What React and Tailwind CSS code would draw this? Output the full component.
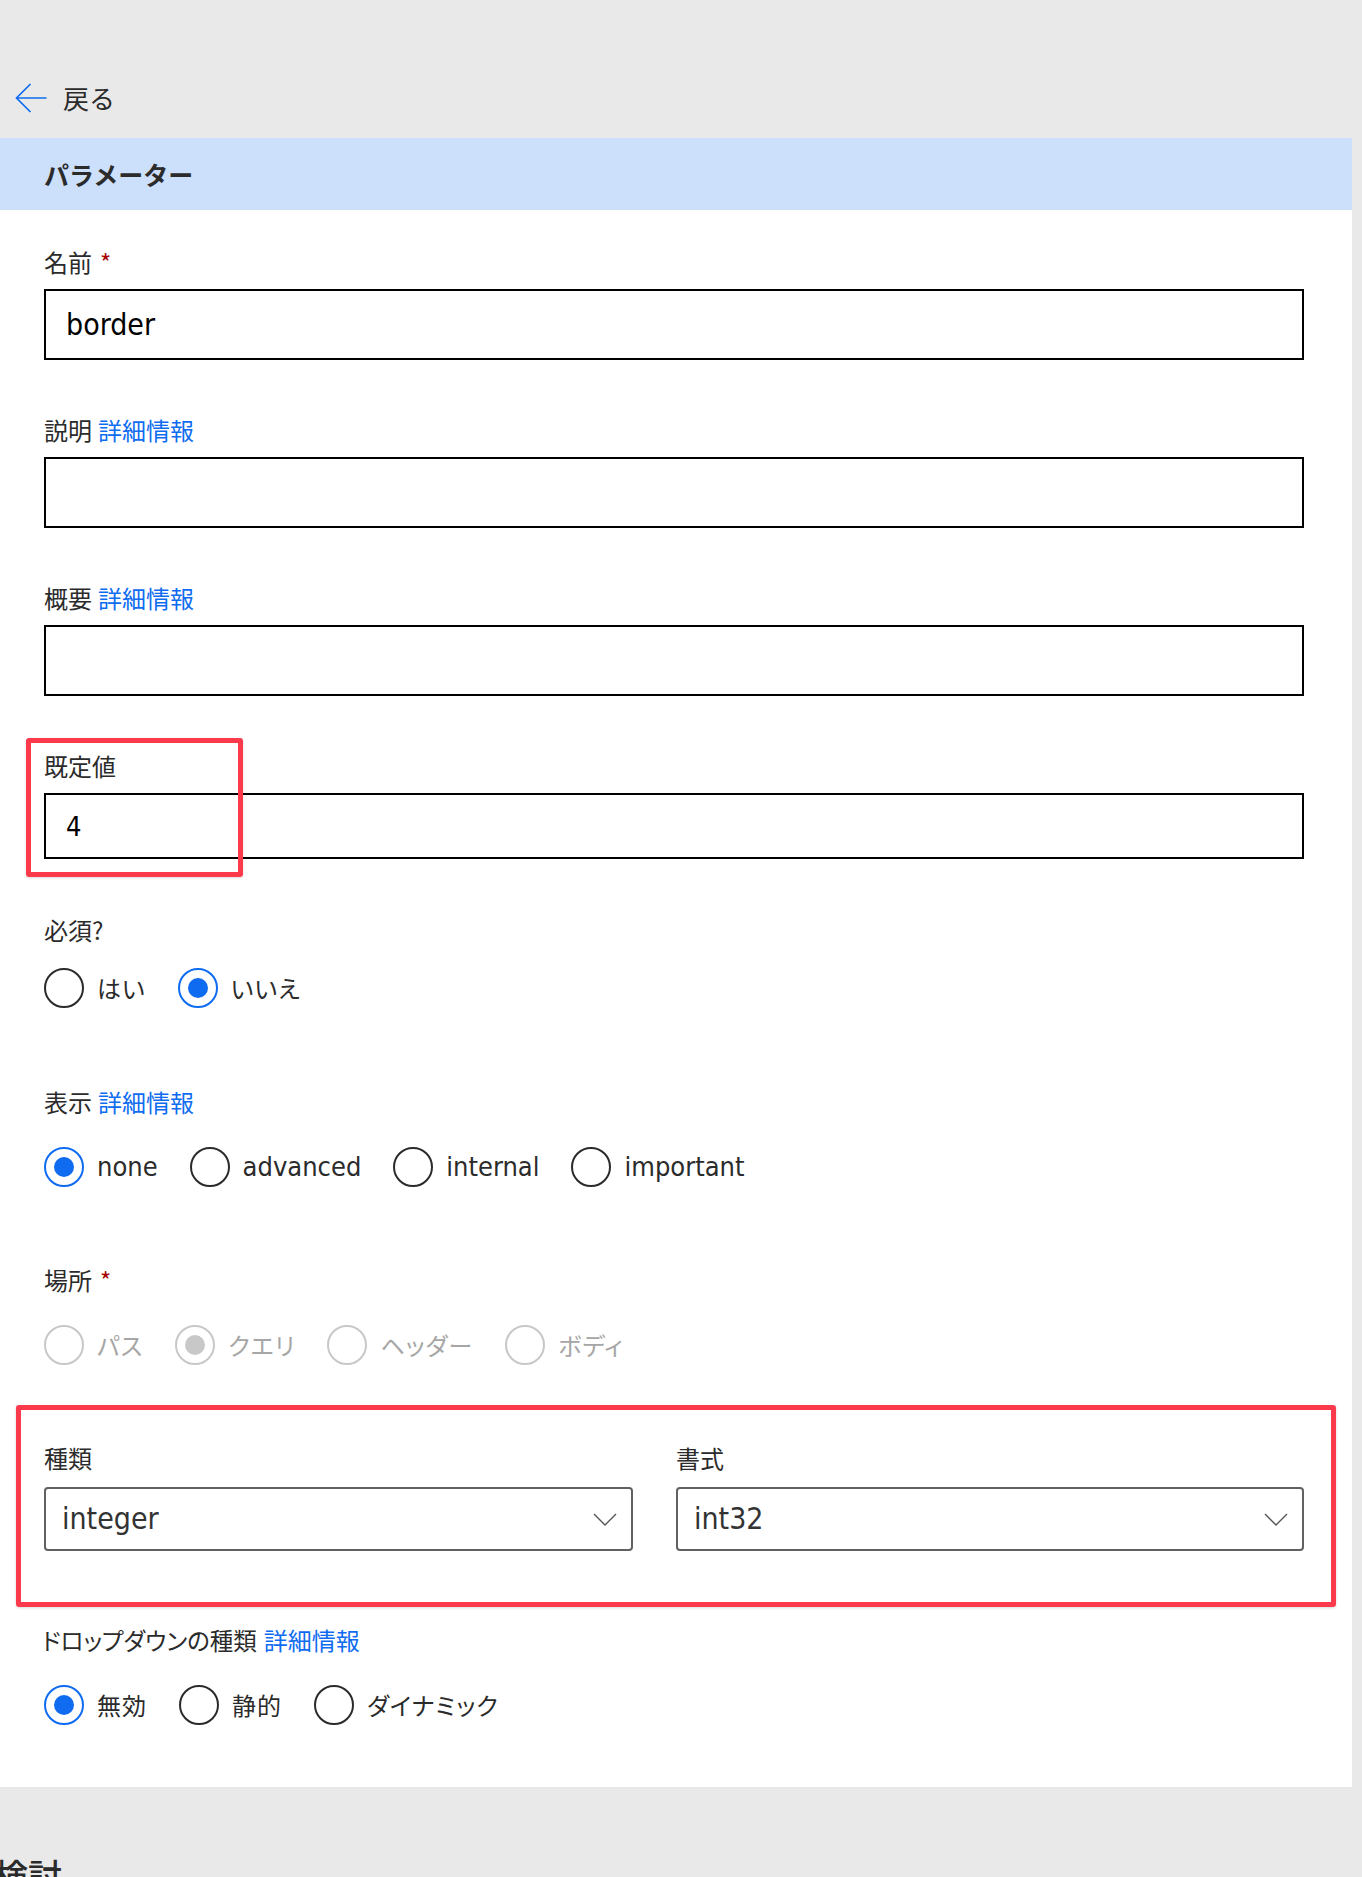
import React from "react";

const LATIN = "font-['Liberation_Sans_Narrow','Arial_Narrow','DejaVu_Sans_Condensed','Noto_Sans_CJK_JP',sans-serif]";

function Label({ children, className = "" }) {
  return (
    <div className={"flex h-[30px] items-center leading-[30px] text-[#2b2b2b] " + className}>
      {children}
    </div>
  );
}

function More() {
  return <span className="ml-[6px] text-[24px] text-[#0f6cf0]">詳細情報</span>;
}

function Star() {
  return <span className="ml-[8px] text-[24px] text-[#a80000]">*</span>;
}

function TextBox({ value, h = "h-[71px]", latinSize = "text-[30px]" }) {
  return (
    <div className={"mt-[12px] flex items-center border-2 border-black bg-white px-[20px] text-black " + h}>
      <span className={LATIN + " leading-none " + latinSize}>{value}</span>
    </div>
  );
}

function Radio({ label, checked = false, disabled = false, latin = false }) {
  const ring = disabled
    ? "border-[#c8c8c8]"
    : checked
    ? "border-[#0f6cf0]"
    : "border-[#2b2b2b]";
  const dot = disabled ? "bg-[#c8c8c8]" : "bg-[#0f6cf0]";
  const txtColor = disabled ? "text-[#a6a6a6]" : "text-[#2b2b2b]";
  return (
    <div className="flex items-center gap-[13px]">
      <span
        className={
          "flex h-[40px] w-[40px] shrink-0 items-center justify-center rounded-full border-2 bg-white " + ring
        }
      >
        {checked && <span className={"h-[20px] w-[20px] rounded-full " + dot} />}
      </span>
      {latin ? (
        <span className={LATIN + " text-[27px] leading-[40px] " + txtColor}>{label}</span>
      ) : (
        <span className={"text-[24px] leading-[40px] tracking-[1px] [font-feature-settings:'palt'] " + txtColor}>
          {label}
        </span>
      )}
    </div>
  );
}

function RadioRow({ children, mt = "mt-[30px]" }) {
  return <div className={"flex h-[40px] items-center gap-[32px] " + mt}>{children}</div>;
}

function Chevron() {
  return (
    <svg width="24" height="13" viewBox="0 0 24 13" fill="none">
      <path d="M1 1l11 11L23 1" stroke="#555" strokeWidth="1.4" />
    </svg>
  );
}

function Select({ value, className = "" }) {
  return (
    <div
      className={
        "mt-[14px] flex h-[64px] items-center justify-between rounded-[4px] border-2 border-[#616161] bg-white pl-[16px] pr-[14px] " +
        className
      }
    >
      <span className={LATIN + " text-[30px] leading-none text-[#333]"}>{value}</span>
      <Chevron />
    </div>
  );
}

export default function App() {
  return (
    <div className="h-[1877px] w-full overflow-hidden bg-[#e9e9e9] font-['Noto_Sans_CJK_JP',sans-serif] text-[#333]">
      {/* back link */}
      <div className="flex h-[138px] items-end pb-[25px] pl-[15px]">
        <div className="flex h-[30px] items-center gap-[16px]">
          <svg width="32" height="30" viewBox="0 0 32 30" fill="none">
            <path d="M31.5 15H1.5M15.5 1L1.5 15l14 14" stroke="#0f6cf0" strokeWidth="1.7" />
          </svg>
          <span className="text-[26px] leading-[30px] text-[#2b2b2b]">戻る</span>
        </div>
      </div>

      {/* panel */}
      <div className="mr-[10px] bg-white pb-[62px]">
        <div className="flex h-[72px] items-center bg-[#cde0fb] pl-[44px]">
          <h1 className="text-[25px] font-bold leading-none text-[#2b2b2b]">パラメーター</h1>
        </div>

        <div className="pl-[44px] pr-[48px] pt-[37px]">
          <div>
            <Label className="text-[24px]">
              名前
              <Star />
            </Label>
            <TextBox value="border" />
          </div>

          <div className="mt-[55px]">
            <Label className="text-[24px]">
              説明
              <More />
            </Label>
            <TextBox value="" />
          </div>

          <div className="mt-[55px]">
            <Label className="text-[24px]">
              概要
              <More />
            </Label>
            <TextBox value="" />
          </div>

          <div className="relative mt-[55px]">
            <Label className="text-[24px]">既定値</Label>
            <TextBox value="4" h="h-[66px]" latinSize="text-[27px]" />
            <div className="pointer-events-none absolute left-[-18px] top-[-13px] h-[139px] w-[217px] rounded-[3px] border-[5px] border-[#fc3a4b] shadow-[0_1px_3px_rgba(0,0,0,0.15)]" />
          </div>

          <div className="mt-[56px]">
            <Label className="text-[24px]">必須?</Label>
            <RadioRow mt="mt-[23px]">
              <Radio label="はい" />
              <Radio label="いいえ" checked />
            </RadioRow>
          </div>

          <div className="mt-[79px]">
            <Label className="text-[24px]">
              表示
              <More />
            </Label>
            <RadioRow>
              <Radio label="none" checked latin />
              <Radio label="advanced" latin />
              <Radio label="internal" latin />
              <Radio label="important" latin />
            </RadioRow>
          </div>

          <div className="mt-[78px]">
            <Label className="text-[24px]">
              場所
              <Star />
            </Label>
            <RadioRow>
              <Radio label="パス" disabled />
              <Radio label="クエリ" checked disabled />
              <Radio label="ヘッダー" disabled />
              <Radio label="ボディ" disabled />
            </RadioRow>
          </div>

          <div className="relative mt-[78px]">
            <div className="flex gap-[43px]">
              <div className="w-[589px]">
                <Label className="text-[24px]">種類</Label>
                <Select value="integer" />
              </div>
              <div className="flex-1">
                <Label className="text-[24px]">書式</Label>
                <Select value="int32" />
              </div>
            </div>
            <div className="pointer-events-none absolute left-[-28px] top-[-38px] h-[202px] w-[1320px] rounded-[3px] border-[5px] border-[#fc3a4b] shadow-[0_1px_3px_rgba(0,0,0,0.15)]" />
          </div>

          <div className="mt-[74px]">
            <Label className="-ml-[2px]">
              <span className="text-[23.5px] [font-feature-settings:'palt']">ドロップダウンの種類</span>
              <span className="ml-[7px] text-[24px] text-[#0f6cf0]">詳細情報</span>
            </Label>
            <RadioRow>
              <Radio label="無効" checked />
              <Radio label="静的" />
              <Radio label="ダイナミック" />
            </RadioRow>
          </div>
        </div>
      </div>

      <h2 className="-ml-[6px] mt-[68px] text-[34px] font-medium leading-[40px] text-[#2b2b2b]">検討</h2>
    </div>
  );
}
